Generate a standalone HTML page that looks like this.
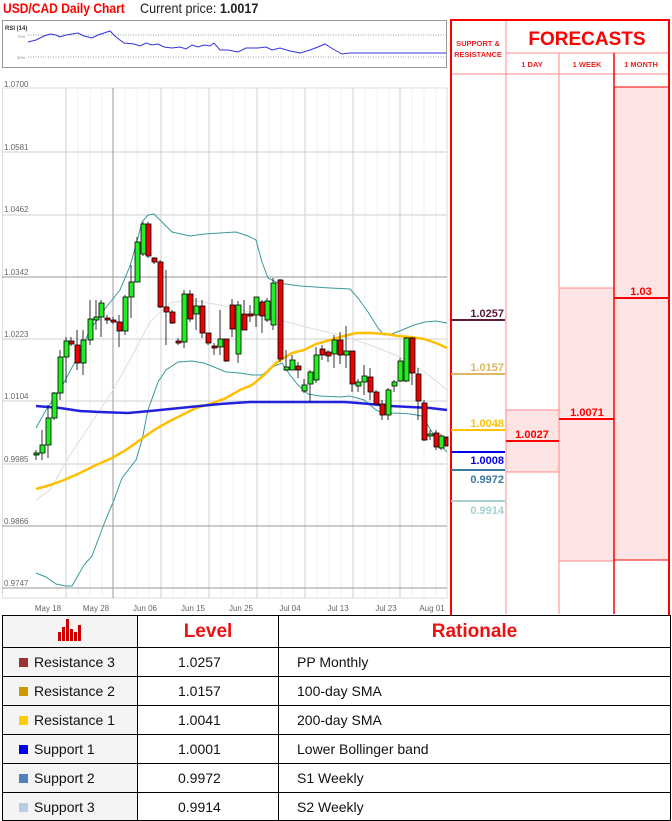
<!DOCTYPE html>
<html><head><meta charset="utf-8"><style>
body{margin:0;width:672px;height:821px;background:#fff;position:relative;overflow:hidden;font-family:"Liberation Sans",sans-serif}
.abs{position:absolute}
table{border-collapse:collapse}
</style></head><body>
<div class="abs" style="left:3px;top:0px;font-size:14px;font-weight:bold;color:#f00;transform:scaleX(0.86);transform-origin:0 0;white-space:nowrap">USD/CAD Daily Chart</div>
<div class="abs" style="left:140px;top:0px;font-size:14px;color:#222;transform:scaleX(0.9);transform-origin:0 0;white-space:nowrap">Current price: <b>1.0017</b></div>
<svg class="abs" style="left:0;top:0" width="672" height="615" xmlns="http://www.w3.org/2000/svg" font-family="Liberation Sans, sans-serif">
<rect x="2.5" y="20.5" width="444" height="47" fill="#fff" stroke="#999"/>
<text x="5" y="30" font-size="6" font-weight="bold" fill="#333">RSI (14)</text>
<text x="17" y="38" font-size="4" fill="#888">70%</text>
<text x="17" y="59" font-size="4" fill="#888">30%</text>
<line x1="28" y1="35" x2="446" y2="35" stroke="#999" stroke-dasharray="1,1.5"/>
<line x1="28" y1="57" x2="446" y2="57" stroke="#999" stroke-dasharray="1,1.5"/>
<polyline fill="none" stroke="#3333dd" stroke-width="1" points="28,42 36,40 44,36 50,34 56,35 60,37 66,35 72,34 78,33 84,36 92,38 98,35 104,33 110,31 116,37 124,43 134,44 140,46 146,43 152,45 158,44 164,47 172,48 180,47 186,49 192,45 198,47 204,45 210,46 214,43 220,50 228,50 238,52 246,48 258,48 266,47 272,50 280,48 290,51 300,53 310,50 318,47 325,44 333,49 342,54 350,53 360,53 446,53"/>
<rect x="2.5" y="88" width="444.5" height="510" fill="#fff" stroke="#ddd"/>
<g stroke="#f2f2f2" stroke-width="1">
<line x1="78" y1="88" x2="78" y2="598"/><line x1="90" y1="88" x2="90" y2="598"/><line x1="102" y1="88" x2="102" y2="598"/><line x1="125" y1="88" x2="125" y2="598"/><line x1="137" y1="88" x2="137" y2="598"/><line x1="149" y1="88" x2="149" y2="598"/>
<line x1="173" y1="88" x2="173" y2="598"/><line x1="185" y1="88" x2="185" y2="598"/><line x1="197" y1="88" x2="197" y2="598"/><line x1="221" y1="88" x2="221" y2="598"/><line x1="233" y1="88" x2="233" y2="598"/><line x1="245" y1="88" x2="245" y2="598"/>
<line x1="269" y1="88" x2="269" y2="598"/><line x1="281" y1="88" x2="281" y2="598"/><line x1="293" y1="88" x2="293" y2="598"/><line x1="317" y1="88" x2="317" y2="598"/><line x1="329" y1="88" x2="329" y2="598"/><line x1="341" y1="88" x2="341" y2="598"/><line x1="365" y1="88" x2="365" y2="598"/><line x1="377" y1="88" x2="377" y2="598"/><line x1="389" y1="88" x2="389" y2="598"/><line x1="412" y1="88" x2="412" y2="598"/><line x1="424" y1="88" x2="424" y2="598"/><line x1="436" y1="88" x2="436" y2="598"/>
</g>
<g stroke="#cfcfcf" stroke-width="1">
<line x1="66" y1="88" x2="66" y2="598"/><line x1="161" y1="88" x2="161" y2="598"/><line x1="209" y1="88" x2="209" y2="598"/><line x1="257" y1="88" x2="257" y2="598"/><line x1="305" y1="88" x2="305" y2="598"/><line x1="353" y1="88" x2="353" y2="598"/><line x1="400" y1="88" x2="400" y2="598"/>
<line x1="2" y1="152" x2="447" y2="152"/><line x1="2" y1="215" x2="447" y2="215"/><line x1="2" y1="339" x2="447" y2="339"/><line x1="2" y1="401" x2="447" y2="401"/><line x1="2" y1="464" x2="447" y2="464"/>
</g>
<g stroke="#999" stroke-width="1">
<line x1="113" y1="88" x2="113" y2="598"/><line x1="2" y1="277" x2="447" y2="277"/><line x1="2" y1="526" x2="447" y2="526"/><line x1="2" y1="588" x2="447" y2="588"/>
</g>
<g font-size="8" fill="#666">
<text x="4" y="87">1.0700</text><text x="4" y="150">1.0581</text><text x="4" y="212">1.0462</text><text x="4" y="275">1.0342</text><text x="4" y="337">1.0223</text><text x="4" y="399">1.0104</text><text x="4" y="462">0.9985</text><text x="4" y="524">0.9866</text><text x="4" y="586">0.9747</text>
</g>
<g font-size="8" fill="#666" text-anchor="middle">
<text x="48" y="611">May 18</text><text x="96" y="611">May 28</text><text x="145" y="611">Jun 06</text><text x="193" y="611">Jun 15</text><text x="241" y="611">Jun 25</text><text x="290" y="611">Jul 04</text><text x="338" y="611">Jul 13</text><text x="386" y="611">Jul 23</text><text x="432" y="611">Aug 01</text>
</g>
<polyline fill="none" stroke="#ddd" points="36,500 50,490 70,455 90,425 110,395 130,360 150,322 170,303 190,300 220,305 250,312 280,320 310,328 340,335 370,345 400,357 425,372 447,390"/>
<polyline fill="none" stroke="#3a9a9a" points="36,428 46,410 60,390 76,360 90,330 104,310 120,290 130,266 136,245 142,222 148,215 154,214 162,222 172,232 190,236 204,234 220,233 236,232 248,236 256,240 262,262 268,278 278,283 300,286 330,288 350,289 358,298 368,312 378,328 384,335 392,334 402,330 414,325 425,322 436,321 447,323"/>
<polyline fill="none" stroke="#3a9a9a" points="36,573 46,577 56,584 66,586 72,586 84,565 92,556 104,524 114,500 122,478 136,460 142,440 148,410 158,382 166,370 178,362 192,361 204,363 214,367 226,372 240,373 252,375 262,375 272,367 282,363 290,375 298,385 308,394 320,396 340,397 350,396 364,400 376,410 384,414 396,413 410,414 422,416 432,432 440,445 447,452"/>
<polyline fill="none" stroke="#ffbf00" stroke-width="2.5" points="36,489 50,485 64,480 80,473 96,465 112,458 126,450 140,440 154,430 168,422 180,416 196,408 210,404 226,398 240,390 252,385 264,375 276,363 292,353 304,350 316,344 330,340 344,336 356,333 370,333 386,334 398,336 410,337 424,339 436,343 447,348"/>
<polyline fill="none" stroke="#2222dd" stroke-width="2.5" points="36,406 60,408 80,411 100,412 128,413 150,411 170,409 200,406 220,404 250,402 280,402 320,402 345,402 370,404 390,406 410,407 430,408 447,410"/>
<g stroke="#000" stroke-width="0.8">
<line x1="36" y1="450" x2="36" y2="460"/><rect x="34" y="453" width="5" height="2" fill="#0c0"/>
<line x1="42" y1="430" x2="42" y2="460"/><rect x="40" y="445" width="5" height="8" fill="#2e2"/>
<line x1="48" y1="405" x2="48" y2="458"/><rect x="46" y="418" width="5" height="27" fill="#2e2"/>
<line x1="54" y1="392" x2="54" y2="420"/><rect x="52" y="393" width="5" height="25" fill="#2e2"/>
<line x1="60" y1="350" x2="60" y2="400"/><rect x="58" y="357" width="5" height="36" fill="#2e2"/>
<line x1="66" y1="337" x2="66" y2="383"/><rect x="64" y="341" width="5" height="16" fill="#2e2"/>
<line x1="71" y1="337" x2="71" y2="346"/><rect x="69" y="341" width="5" height="3" fill="#e00"/>
<line x1="77" y1="330" x2="77" y2="370"/><rect x="75" y="345" width="5" height="18" fill="#e00"/>
<line x1="83" y1="330" x2="83" y2="375"/><rect x="81" y="340" width="5" height="23" fill="#2e2"/>
<line x1="90" y1="300" x2="90" y2="345"/><rect x="88" y="319" width="5" height="21" fill="#2e2"/>
<line x1="96" y1="300" x2="96" y2="330"/><rect x="94" y="317" width="5" height="3" fill="#2e2"/>
<line x1="101" y1="300" x2="101" y2="337"/><rect x="99" y="303" width="5" height="14" fill="#2e2"/>
<line x1="107" y1="315" x2="107" y2="324"/><rect x="105" y="318" width="5" height="2" fill="#e00"/>
<line x1="113" y1="317" x2="113" y2="324"/><rect x="111" y="320" width="5" height="2" fill="#e00"/>
<line x1="119" y1="315" x2="119" y2="347"/><rect x="117" y="322" width="5" height="9" fill="#e00"/>
<line x1="125" y1="295" x2="125" y2="335"/><rect x="123" y="297" width="5" height="34" fill="#2e2"/>
<line x1="131" y1="265" x2="131" y2="318"/><rect x="129" y="282" width="5" height="15" fill="#2e2"/>
<line x1="137" y1="237" x2="137" y2="282"/><rect x="135" y="242" width="5" height="40" fill="#2e2"/>
<line x1="143" y1="222" x2="143" y2="256"/><rect x="141" y="224" width="5" height="30" fill="#2e2"/>
<line x1="148" y1="222" x2="148" y2="258"/><rect x="146" y="224" width="5" height="32" fill="#e00"/>
<line x1="154" y1="257" x2="154" y2="264"/><rect x="152" y="258" width="5" height="4" fill="#e00"/>
<line x1="160" y1="260" x2="160" y2="308"/><rect x="158" y="262" width="5" height="45" fill="#e00"/>
<line x1="166" y1="270" x2="166" y2="345"/><rect x="164" y="307" width="5" height="5" fill="#e00"/>
<line x1="172" y1="310" x2="172" y2="324"/><rect x="170" y="312" width="5" height="11" fill="#e00"/>
<line x1="178" y1="338" x2="178" y2="345"/><rect x="176" y="341" width="5" height="2" fill="#e00"/>
<line x1="184" y1="290" x2="184" y2="348"/><rect x="182" y="294" width="5" height="48" fill="#2e2"/>
<line x1="190" y1="290" x2="190" y2="322"/><rect x="188" y="294" width="5" height="25" fill="#e00"/>
<line x1="196" y1="298" x2="196" y2="330"/><rect x="194" y="306" width="5" height="8" fill="#2e2"/>
<line x1="202" y1="300" x2="202" y2="338"/><rect x="200" y="306" width="5" height="27" fill="#e00"/>
<line x1="208" y1="333" x2="208" y2="345"/><rect x="206" y="333" width="5" height="10" fill="#e00"/>
<line x1="214" y1="343" x2="214" y2="355"/><rect x="212" y="346" width="5" height="2" fill="#e00"/>
<line x1="220" y1="310" x2="220" y2="355"/><rect x="218" y="339" width="5" height="8" fill="#2e2"/>
<line x1="226" y1="339" x2="226" y2="362"/><rect x="224" y="339" width="5" height="22" fill="#e00"/>
<line x1="232" y1="299" x2="232" y2="337"/><rect x="230" y="305" width="5" height="24" fill="#e00"/>
<line x1="238" y1="301" x2="238" y2="363"/><rect x="236" y="305" width="5" height="49" fill="#2e2"/>
<line x1="244" y1="300" x2="244" y2="330"/><rect x="242" y="314" width="5" height="16" fill="#e00"/>
<line x1="250" y1="305" x2="250" y2="322"/><rect x="248" y="314" width="5" height="2" fill="#e00"/>
<line x1="256" y1="297" x2="256" y2="327"/><rect x="254" y="297" width="5" height="18" fill="#2e2"/>
<line x1="262" y1="300" x2="262" y2="333"/><rect x="260" y="302" width="5" height="14" fill="#e00"/>
<line x1="267" y1="298" x2="267" y2="322"/><rect x="265" y="301" width="5" height="19" fill="#2e2"/>
<line x1="273" y1="278" x2="273" y2="330"/><rect x="271" y="283" width="5" height="42" fill="#2e2"/>
<line x1="280" y1="279" x2="280" y2="362"/><rect x="278" y="280" width="5" height="79" fill="#e00"/>
<line x1="286" y1="350" x2="286" y2="371"/><rect x="284" y="367" width="5" height="3" fill="#2e2"/>
<line x1="292" y1="355" x2="292" y2="370"/><rect x="290" y="360" width="5" height="10" fill="#2e2"/>
<line x1="298" y1="362" x2="298" y2="378"/><rect x="296" y="366" width="5" height="4" fill="#e00"/>
<line x1="304" y1="379" x2="304" y2="393"/><rect x="302" y="385" width="5" height="6" fill="#2e2"/>
<line x1="310" y1="370" x2="310" y2="402"/><rect x="308" y="372" width="5" height="12" fill="#2e2"/>
<line x1="316" y1="347" x2="316" y2="383"/><rect x="314" y="355" width="5" height="25" fill="#2e2"/>
<line x1="322" y1="345" x2="322" y2="360"/><rect x="320" y="349" width="5" height="6" fill="#e00"/>
<line x1="328" y1="350" x2="328" y2="362"/><rect x="326" y="352" width="5" height="4" fill="#e00"/>
<line x1="334" y1="335" x2="334" y2="368"/><rect x="332" y="340" width="5" height="14" fill="#2e2"/>
<line x1="340" y1="332" x2="340" y2="364"/><rect x="338" y="340" width="5" height="15" fill="#e00"/>
<line x1="346" y1="326" x2="346" y2="368"/><rect x="344" y="351" width="5" height="4" fill="#2e2"/>
<line x1="352" y1="351" x2="352" y2="392"/><rect x="350" y="351" width="5" height="33" fill="#e00"/>
<line x1="358" y1="379" x2="358" y2="392"/><rect x="356" y="382" width="5" height="4" fill="#2e2"/>
<line x1="364" y1="365" x2="364" y2="395"/><rect x="362" y="376" width="5" height="6" fill="#2e2"/>
<line x1="370" y1="368" x2="370" y2="400"/><rect x="368" y="377" width="5" height="15" fill="#e00"/>
<line x1="376" y1="390" x2="376" y2="404"/><rect x="374" y="392" width="5" height="12" fill="#e00"/>
<line x1="382" y1="400" x2="382" y2="420"/><rect x="380" y="404" width="5" height="11" fill="#e00"/>
<line x1="388" y1="388" x2="388" y2="420"/><rect x="386" y="390" width="5" height="25" fill="#2e2"/>
<line x1="394" y1="380" x2="394" y2="392"/><rect x="392" y="382" width="5" height="4" fill="#2e2"/>
<line x1="400" y1="358" x2="400" y2="382"/><rect x="398" y="361" width="5" height="20" fill="#2e2"/>
<line x1="406" y1="337" x2="406" y2="382"/><rect x="404" y="338" width="5" height="43" fill="#2e2"/>
<line x1="412" y1="337" x2="412" y2="385"/><rect x="410" y="338" width="5" height="35" fill="#e00"/>
<line x1="418" y1="368" x2="418" y2="420"/><rect x="416" y="374" width="5" height="27" fill="#e00"/>
<line x1="424" y1="400" x2="424" y2="441"/><rect x="422" y="403" width="5" height="37" fill="#e00"/>
<line x1="430" y1="430" x2="430" y2="440"/><rect x="428" y="434" width="5" height="2" fill="#2e2"/>
<line x1="436" y1="430" x2="436" y2="450"/><rect x="434" y="433" width="5" height="14" fill="#e00"/>
<line x1="441" y1="434" x2="441" y2="450"/><rect x="439" y="436" width="5" height="12" fill="#2e2"/>
<rect x="445" y="437" width="3" height="9" fill="#e00"/>
</g>
<rect x="506" y="410" width="53" height="62" fill="#fde4e4" stroke="#f88" stroke-width="1"/>
<rect x="559" y="288" width="55" height="273" fill="#fde4e4" stroke="#f88" stroke-width="1"/>
<rect x="614" y="87" width="55" height="473" fill="#fde4e4" stroke="#f00" stroke-width="1"/>
<g stroke="#f88" stroke-width="1">
<line x1="506" y1="20" x2="506" y2="614"/><line x1="559" y1="53" x2="559" y2="614"/><line x1="506" y1="53" x2="669" y2="53"/><line x1="451" y1="74" x2="669" y2="74"/>
</g>
<line x1="614" y1="53" x2="614" y2="614" stroke="#f00" stroke-width="1.5"/>
<rect x="451" y="20" width="218" height="596" fill="none" stroke="#f00" stroke-width="2"/>
<text x="478" y="46" font-size="7.5" font-weight="bold" fill="#e22" text-anchor="middle">SUPPORT &amp;</text>
<text x="478" y="57" font-size="7.5" font-weight="bold" fill="#e22" text-anchor="middle">RESISTANCE</text>
<text x="587" y="45" font-size="19" font-weight="bold" fill="#f00" text-anchor="middle">FORECASTS</text>
<g font-size="7.5" font-weight="bold" fill="#e22" text-anchor="middle"><text x="532" y="67">1 DAY</text><text x="587" y="67">1 WEEK</text><text x="641" y="67">1 MONTH</text></g>
<g stroke-width="2">
<line x1="451" y1="320" x2="505" y2="320" stroke="#5a1a3a"/>
<line x1="451" y1="374" x2="505" y2="374" stroke="#d8b860"/>
<line x1="451" y1="430" x2="505" y2="430" stroke="#ffc000"/>
<line x1="451" y1="452" x2="505" y2="452" stroke="#0000ee"/>
<line x1="451" y1="470" x2="505" y2="470" stroke="#3a7aa0"/>
<line x1="451" y1="501" x2="505" y2="501" stroke="#a8d0d0"/>
<line x1="506" y1="441" x2="559" y2="441" stroke="#f00"/>
<line x1="559" y1="419" x2="614" y2="419" stroke="#f00"/>
<line x1="614" y1="298" x2="669" y2="298" stroke="#f00"/>
</g>
<g font-size="11" font-weight="bold" text-anchor="end">
<text x="504" y="317" fill="#5a1a3a">1.0257</text>
<text x="504" y="371" fill="#d8b860">1.0157</text>
<text x="504" y="427" fill="#ffc000">1.0048</text>
<text x="504" y="464" fill="#0000ee">1.0008</text>
<text x="504" y="483" fill="#3a7aa0">0.9972</text>
<text x="504" y="514" fill="#a8d0d0">0.9914</text>
</g>
<g font-size="11" font-weight="bold" fill="#f00" text-anchor="middle">
<text x="532" y="438">1.0027</text><text x="587" y="416">1.0071</text><text x="641" y="295">1.03</text>
</g>
</svg>
<table class="abs" style="left:2px;top:615px;width:669px;font-size:14px;color:#111">
<colgroup><col style="width:135px"><col style="width:141px"><col></colgroup>
<tr style="height:32px"><td style="border:1px solid #000;text-align:center;background:#f4f4f4">
<svg width="26" height="22" viewBox="0 0 26 22"><g fill="#c00"><rect x="1" y="13" width="3" height="9"/><rect x="5" y="8" width="3" height="14"/><rect x="9" y="0" width="3" height="22"/><rect x="13" y="10" width="3" height="12"/><rect x="17" y="13" width="3" height="9"/><rect x="21" y="6" width="3" height="16"/></g></svg></td>
<td style="border:1px solid #000;text-align:center;color:#e11;font-weight:bold;font-size:19px">Level</td>
<td style="border:1px solid #000;text-align:center;color:#e11;font-weight:bold;font-size:19px">Rationale</td></tr>
<tr style="height:29px"><td style="border:1px solid #000;background:#f4f4f4;padding-left:16px"><span style="display:inline-block;width:9px;height:9px;background:#9b3333;margin-right:6px"></span>Resistance 3</td><td style="border:1px solid #000;padding-left:40px">1.0257</td><td style="border:1px solid #000;padding-left:18px">PP Monthly</td></tr>
<tr style="height:29px"><td style="border:1px solid #000;background:#f4f4f4;padding-left:16px"><span style="display:inline-block;width:9px;height:9px;background:#cc9900;margin-right:6px"></span>Resistance 2</td><td style="border:1px solid #000;padding-left:40px">1.0157</td><td style="border:1px solid #000;padding-left:18px">100-day SMA</td></tr>
<tr style="height:29px"><td style="border:1px solid #000;background:#f4f4f4;padding-left:16px"><span style="display:inline-block;width:9px;height:9px;background:#ffcc00;margin-right:6px"></span>Resistance 1</td><td style="border:1px solid #000;padding-left:40px">1.0041</td><td style="border:1px solid #000;padding-left:18px">200-day SMA</td></tr>
<tr style="height:29px"><td style="border:1px solid #000;background:#f4f4f4;padding-left:16px"><span style="display:inline-block;width:9px;height:9px;background:#0000ee;margin-right:6px"></span>Support 1</td><td style="border:1px solid #000;padding-left:40px">1.0001</td><td style="border:1px solid #000;padding-left:18px">Lower Bollinger band</td></tr>
<tr style="height:29px"><td style="border:1px solid #000;background:#f4f4f4;padding-left:16px"><span style="display:inline-block;width:9px;height:9px;background:#4f81bd;margin-right:6px"></span>Support 2</td><td style="border:1px solid #000;padding-left:40px">0.9972</td><td style="border:1px solid #000;padding-left:18px">S1 Weekly</td></tr>
<tr style="height:28px"><td style="border:1px solid #000;background:#f4f4f4;padding-left:16px"><span style="display:inline-block;width:9px;height:9px;background:#b8cce4;margin-right:6px"></span>Support 3</td><td style="border:1px solid #000;padding-left:40px">0.9914</td><td style="border:1px solid #000;padding-left:18px">S2 Weekly</td></tr>
</table>
</body></html>
